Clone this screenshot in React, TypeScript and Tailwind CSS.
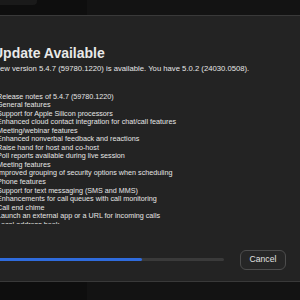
const notes = [
  'Release notes of 5.4.7 (59780.1220)',
  'General features',
  'Support for Apple Silicon processors',
  'Enhanced cloud contact integration for chat/call features',
  'Meeting/webinar features',
  'Enhanced nonverbal feedback and reactions',
  'Raise hand for host and co-host',
  'Poll reports available during live session',
  'Meeting features',
  'Improved grouping of security options when scheduling',
  'Phone features',
  'Support for text messaging (SMS and MMS)',
  'Enhancements for call queues with call monitoring',
  'Call end chime',
  'Launch an external app or a URL for incoming calls',
  'Local address book',
]

export default function App() {
  const progress = 0.64
  return (
    <div
      className="w-[300px] h-[300px] overflow-hidden bg-[linear-gradient(to_right,#0e0e0e_87px,#131313_87px)] text-[#e6e6e6]"
      style={{ fontFamily: '"Liberation Sans", Arial, sans-serif' }}
    >
      <div className="h-[15px]">
        <div className="w-[37px] h-[5px] rounded-br-[4px] bg-[#1a1a1a]" />
      </div>

      <div className="-ml-[20px] w-[340px] h-[267px] border-y border-[#393939] bg-[#232323] pl-[15.5px] pr-[34px] pt-[29px]">
        <h1 className="-ml-[2.5px] text-[14px] leading-[16px] font-bold text-[#e9e9e9]">Update Available</h1>
        <p className="mt-[3px] text-[7.7px] leading-[10px] -ml-[1px]">
          New version 5.4.7 (59780.1220) is available. You have 5.0.2 (24030.0508).
        </p>

        <div className="mt-[18.5px] ml-[1.5px] h-[131px] overflow-hidden text-[7.2px] leading-[8.55px]">
          {notes.map((line, i) => (
            <div key={i} className="whitespace-nowrap">{line}</div>
          ))}
        </div>

        <div className="mt-[26px] flex items-center gap-[16px] h-[20px]">
          <div className="flex-1 h-[3px] rounded-full bg-[#3a3a3a] overflow-hidden">
            <div className="h-full rounded-full bg-[#2f6bdc]" style={{ width: `${progress * 100}%` }} />
          </div>
          <button className="w-[46px] h-[20px] rounded-[6px] border border-[#4d4d4d] bg-[#262626] text-[8.6px] text-[#e2e2e2]">
            Cancel
          </button>
        </div>
      </div>
    </div>
  )
}
